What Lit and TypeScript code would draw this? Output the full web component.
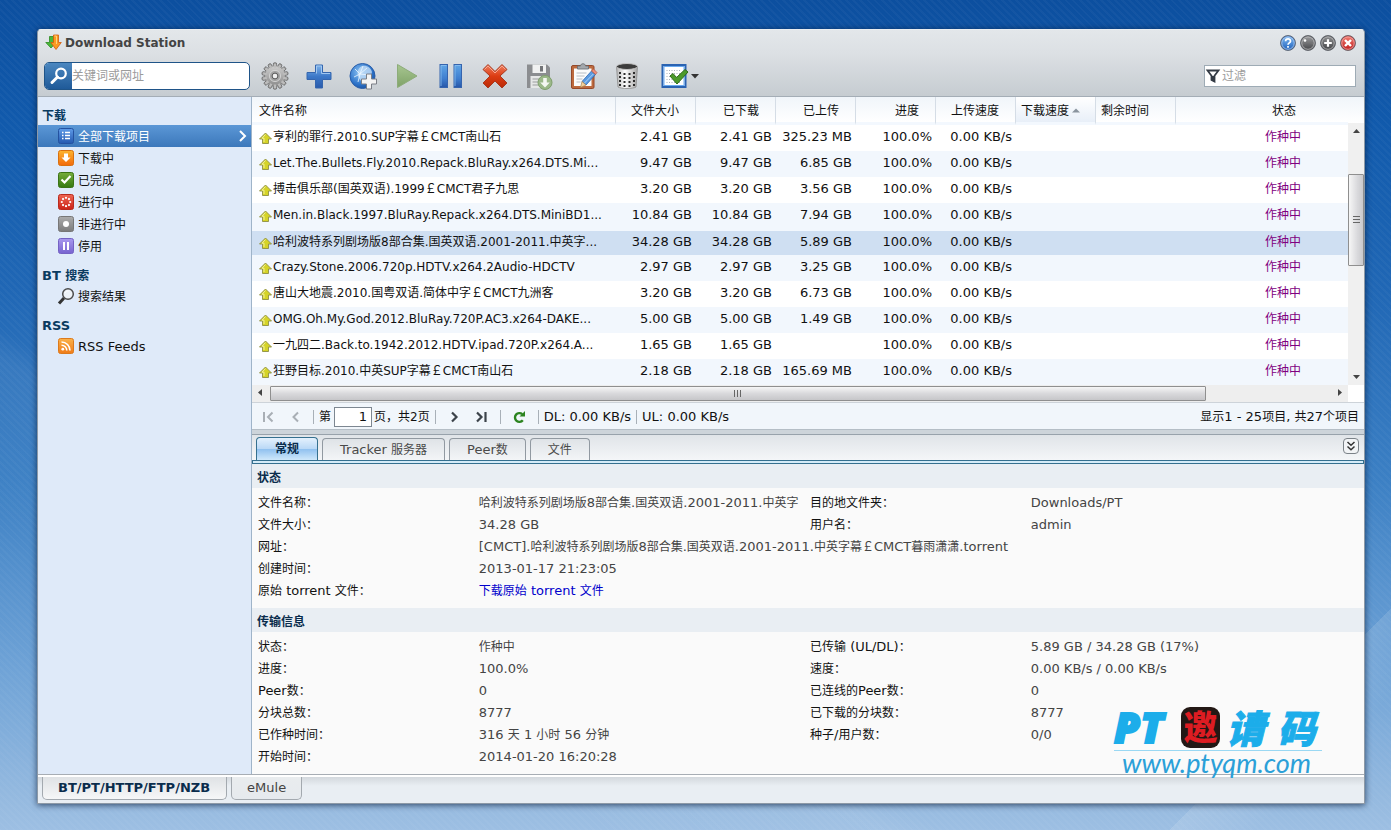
import { LitElement, html, css, svg, nothing } from "lit";
import { customElement, state } from "lit/decorators.js";
import { classMap } from "lit/directives/class-map.js";

const CJK_RUN = /([\u3000-\u9fff\uff00-\uffef]+)/;

/** Chinese runs are set one pixel smaller than the Latin text around them. */
const mixed = (text: string) =>
  text.split(CJK_RUN).map((part, i) => (i % 2 ? html`<span class="han">${part}</span>` : part));

const icon = (w: number, h: number, body: unknown) =>
  html`<svg class="icon" width=${w} height=${h} viewBox="0 0 ${w} ${h}" aria-hidden="true">${body}</svg>`;

const teeth = Array.from({ length: 14 }, (_, i) => (i * 360) / 14);
const spinnerDots = Array.from({ length: 8 }, (_, i) => i * 45);
const holes = [11, 15, 19, 23].flatMap((y) => [7, 11.5, 16.5, 21].map((x) => [x, y + (x > 8 && x < 20 ? 1 : 0)]));

const TOOLS = [
  {
    name: "设置",
    art: svg`
      <defs><linearGradient id="gs" x1="0" y1="0" x2="0" y2="1"><stop offset="0" stop-color="#cfcfcf"/><stop offset="1" stop-color="#8b8b8b"/></linearGradient></defs>
      ${teeth.map((a) => svg`<rect x="12.4" y="0.8" width="3.2" height="5" rx="1" fill="#aaa" stroke="#5f5f5f" stroke-width=".8" transform="rotate(${a} 14 14)"/>`)}
      <circle cx="14" cy="14" r="10.400" fill="url(#gs)" stroke="#777" stroke-width=".7"/>
      ${teeth.map((a) => svg`<rect x="12.8" y="2" width="2.4" height="3.500" fill="#bcbcbc" transform="rotate(${a} 14 14)"/>`)}
      <circle cx="14" cy="14" r="5.600" fill="#a2a2a2" stroke="#dadada" stroke-width=".8"/>
      <circle cx="14" cy="14" r="2.900" fill="#efefef" stroke="#555"/>`,
  },
  {
    name: "新增",
    art: svg`
      <defs><linearGradient id="pl" x1="0" y1="0" x2="0" y2="1"><stop offset="0" stop-color="#7db2ea"/><stop offset=".5" stop-color="#3c78c8"/><stop offset="1" stop-color="#2a5bab"/></linearGradient></defs>
      <path d="M10.500 3h7v7.500H26v7h-8.500V26h-7v-8.500H2v-7h8.500z" fill="url(#pl)" stroke="#3566ae"/>
      <path d="M11.500 11.500V4h5v7.500H25" fill="none" stroke="#a8cdf3" stroke-width=".9"/>`,
  },
  {
    name: "新增网址",
    art: svg`
      <defs><radialGradient id="gl" cx=".4" cy=".35" r=".7"><stop offset="0" stop-color="#8cc4f5"/><stop offset=".7" stop-color="#2c72c8"/><stop offset="1" stop-color="#1b519f"/></radialGradient></defs>
      <circle cx="13.500" cy="14" r="12.500" fill="url(#gl)" stroke="#2a5ea9"/>
      <path d="M13 4c5-1 9 2 10 6-1 4-3 5-5 5l-1 5c-3 1-6-1-8-6-1-4 0-8 4-10z" fill="#c9e2f8" opacity=".75"/>
      <path d="M6 7l5 5 7-6M9 20l2-8 9 1M5 15l6-3M14 4l-3 8" fill="none" stroke="#edf6ff" stroke-width=".9" opacity=".9"/>
      <path d="M17.500 12h5v5h5v5h-5v5h-5v-5h-5v-5h5z" fill="#f3f3f3" stroke="#7b7f86"/>`,
  },
  {
    name: "继续",
    art: svg`
      <defs><linearGradient id="py" x1="0" y1="0" x2="0" y2="1"><stop offset="0" stop-color="#a7c690"/><stop offset="1" stop-color="#7fa268"/></linearGradient></defs>
      <path d="M4.500 2.500L24 14 4.500 25.500z" fill="url(#py)" stroke="#8dac7a"/>`,
  },
  {
    name: "暂停",
    art: svg`
      <defs><linearGradient id="pa" x1="0" y1="0" x2="0" y2="1"><stop offset="0" stop-color="#5fa5e6"/><stop offset=".6" stop-color="#3f7fd0"/><stop offset="1" stop-color="#2656a8"/></linearGradient></defs>
      <rect x="3" y="2.500" width="7.500" height="23" fill="url(#pa)" stroke="#3564ae"/><rect x="17" y="2.500" width="7.500" height="23" fill="url(#pa)" stroke="#3564ae"/>
      <path d="M4 24V3.500h5.500M18 24V3.500h5.500" fill="none" stroke="#8cc0f0" stroke-width=".8"/>`,
  },
  {
    name: "删除",
    art: svg`
      <defs><linearGradient id="rm" x1="0" y1="0" x2="0" y2="1"><stop offset="0" stop-color="#f08060"/><stop offset=".5" stop-color="#dc3c12"/><stop offset="1" stop-color="#b92a08"/></linearGradient></defs>
      <path d="M7 2.500l7 7 7-7 5 5-7 6.500 7 7-5 5-7-7-7 7-5-5 7-7-7-6.500z" fill="url(#rm)" stroke="#a83a20"/>
      <path d="M3.500 7.500L7 4l7 7 7-7 3.500 3.500" fill="none" stroke="#f9a78f"/>`,
  },
  {
    name: "保存",
    art: svg`
      <path d="M2 2.500h20l3 3V26H2z" fill="#8b8d90"/>
      <rect x="7.500" y="2.500" width="13.500" height="8.500" fill="#f0f1f1"/><rect x="15" y="4" width="3" height="5.500" fill="#737578"/>
      <rect x="5.500" y="14" width="17" height="12" fill="#e6e7e7"/><path d="M7.500 17h9M7.500 20h7M7.500 23h6" stroke="#9b9d9f"/>
      <circle cx="20" cy="20.500" r="7" fill="#9bb889" stroke="#7f9f6d"/>
      <path d="M18.200 16h3.600v4.500h3L20 25.500l-4.800-5h3z" fill="#f4f7f2"/>`,
  },
  {
    name: "编辑",
    art: svg`
      <rect x="2.500" y="3.500" width="22.500" height="23" rx="1.500" fill="#bd6a3e" stroke="#95492a"/>
      <rect x="5" y="6.500" width="17.500" height="17.500" fill="#fbfbfb"/>
      <path d="M8.500 7V4h3c0-3 5-3 5 0h3v3z" fill="#a3a8ad" stroke="#6c7176" stroke-width=".9"/>
      <path d="M7.500 11h10M7.500 14h8M7.500 17h6M7.500 20h4" stroke="#b9bec4"/>
      <path d="M22.500 9l4 3.500-9.500 10.500-4-3.500z" fill="#5c9ce2" stroke="#2f66b0" stroke-width=".8"/>
      <path d="M24.300 12L15.500 21" stroke="#b2d5f7"/><path d="M22.500 9l2-2 3.500 3.500-1.500 2z" fill="#ee8e78" stroke="#b65a47" stroke-width=".7"/>
      <path d="M13 19.500l4 3.500-5.500 2.500z" fill="#f5d29d" stroke="#a8824f" stroke-width=".7"/>`,
  },
  {
    name: "清除",
    art: svg`
      <defs><linearGradient id="tr" x1="0" y1="0" x2="1" y2="0"><stop offset="0" stop-color="#b4b4b4"/><stop offset=".4" stop-color="#fff"/><stop offset="1" stop-color="#a6a6a6"/></linearGradient></defs>
      <path d="M3.500 4.500L5 25c3 2 15 2 18 0l1.500-20.500z" fill="url(#tr)" stroke="#8b8b8b" stroke-width=".8"/>
      ${holes.map(([x, y]) => svg`<rect x=${x - 1} y=${y - 1} width="2" height="2" fill="#2c2c2c"/>`)}
      <ellipse cx="14" cy="4.500" rx="10.500" ry="3" fill="#3c3c3c" stroke="#c4c4c4"/>`,
  },
];

const PICK = svg`
  <rect x="1.500" y="3" width="23" height="22" fill="#fff" stroke="#2a63b2" stroke-width="2"/>
  <rect x="3" y="4.500" width="20" height="19" fill="#fff" stroke="#6aaaf0"/>
  <path d="M5.500 8.500H20M5.500 11.500H20M5.500 14.500H20M5.500 17.500H20M5.500 20.500H20" stroke="#a9b2bd" stroke-dasharray="1 1.500"/>
  <path d="M9 14l3-2.500 3.500 4L24 7.500l3 2.500L16 22z" fill="#4c9a2a" stroke="#2f6b19"/>`;

const tile = (id: string, top: string, bottom: string, edge: string, mark: unknown) => svg`
  <defs><linearGradient id=${id} x1="0" y1="0" x2="0" y2="1"><stop offset="0" stop-color=${top}/><stop offset="1" stop-color=${bottom}/></linearGradient></defs>
  <rect x=".5" y=".5" width="15" height="15" rx="2" fill="url(#${id})" stroke=${edge}/>${mark}`;

const GROUPS = [
  {
    title: "下载",
    items: [
      { name: "全部下载项目", art: tile("n1", "#5f9be8", "#2459b0", "#2452a0", svg`<path d="M4 4.500h1.500M7 4.500h5M4 7.500h1.500M7 7.500h5M4 10.500h1.500M7 10.500h5" stroke="#fff" stroke-width="1.500"/>`) },
      { name: "下载中", art: tile("n2", "#fdb52f", "#f26a0c", "#d9700f", svg`<path d="M6 3.500h4v4h2.500L8 12 3.500 7.500H6z" fill="#fff"/>`) },
      { name: "已完成", art: tile("n3", "#76ad3c", "#34780f", "#3b7316", svg`<path d="M3.500 7.500l3 3L12.500 4" fill="none" stroke="#fff" stroke-width="2.200"/>`) },
      { name: "进行中", art: tile("n4", "#ee6653", "#cb2317", "#b92a1e", spinnerDots.map((a) => svg`<circle cx="8" cy="3.800" r="1.100" fill="#fff" transform="rotate(${a} 8 8)"/>`)) },
      { name: "非进行中", art: tile("n5", "#acacac", "#7b7b7b", "#777", svg`<circle cx="8" cy="8" r="3" fill="#fff"/>`) },
      { name: "停用", art: tile("n6", "#a898ee", "#7763cf", "#7462c4", svg`<path d="M6 4v8M10 4v8" stroke="#fff" stroke-width="2"/>`) },
    ],
  },
  {
    title: "BT 搜索",
    items: [
      { name: "搜索结果", art: svg`<path d="M1 15.500L6 10" stroke="#333" stroke-width="3"/><circle cx="10" cy="6" r="5.300" fill="#eef3f8" stroke="#4b4b4b" stroke-width="1.500"/><path d="M7 5c.5-1.500 2-2 3.500-2" fill="none" stroke="#fff"/>` },
    ],
  },
  {
    title: "RSS",
    items: [
      { name: "RSS Feeds", art: tile("n7", "#fbb24a", "#ef7b18", "#dc7a1c", svg`<circle cx="4.800" cy="11.200" r="1.400" fill="#fff"/><path d="M3.500 7.200a5.300 5.300 0 0 1 5.300 5.300M3.500 4a8.500 8.500 0 0 1 8.500 8.500" fill="none" stroke="#fff" stroke-width="1.600"/>`) },
    ],
  },
];

const COLUMNS = [
  { title: "文件名称", cls: "c-name" },
  { title: "文件大小", cls: "c-num" },
  { title: "已下载", cls: "c-num" },
  { title: "已上传", cls: "c-num" },
  { title: "进度", cls: "c-num" },
  { title: "上传速度", cls: "c-num" },
  { title: "下载速度", cls: "c-text", sorted: true },
  { title: "剩余时间", cls: "c-text" },
  { title: "状态", cls: "c-state" },
];

const ROWS: [string, string, string, string][] = [
  ["亨利的罪行.2010.SUP字幕￡CMCT南山石", "2.41 GB", "2.41 GB", "325.23 MB"],
  ["Let.The.Bullets.Fly.2010.Repack.BluRay.x264.DTS.Mi...", "9.47 GB", "9.47 GB", "6.85 GB"],
  ["搏击俱乐部(国英双语).1999￡CMCT君子九思", "3.20 GB", "3.20 GB", "3.56 GB"],
  ["Men.in.Black.1997.BluRay.Repack.x264.DTS.MiniBD1...", "10.84 GB", "10.84 GB", "7.94 GB"],
  ["哈利波特系列剧场版8部合集.国英双语.2001-2011.中英字...", "34.28 GB", "34.28 GB", "5.89 GB"],
  ["Crazy.Stone.2006.720p.HDTV.x264.2Audio-HDCTV", "2.97 GB", "2.97 GB", "3.25 GB"],
  ["唐山大地震.2010.国粤双语.简体中字￡CMCT九洲客", "3.20 GB", "3.20 GB", "6.73 GB"],
  ["OMG.Oh.My.God.2012.BluRay.720P.AC3.x264-DAKE...", "5.00 GB", "5.00 GB", "1.49 GB"],
  ["一九四二.Back.to.1942.2012.HDTV.ipad.720P.x264.A...", "1.65 GB", "1.65 GB", ""],
  ["狂野目标.2010.中英SUP字幕￡CMCT南山石", "2.18 GB", "2.18 GB", "165.69 MB"],
];

const TABS = ["常规", "Tracker 服务器", "Peer数", "文件"];

const STATUS = [
  ["文件名称：", "哈利波特系列剧场版8部合集.国英双语.2001-2011.中英字", "目的地文件夹：", "Downloads/PT"],
  ["文件大小：", "34.28 GB", "用户名：", "admin"],
  ["网址：", "[CMCT].哈利波特系列剧场版8部合集.国英双语.2001-2011.中英字幕￡CMCT暮雨潇潇.torrent"],
  ["创建时间：", "2013-01-17 21:23:05"],
];

const TRANSFER = [
  ["状态：", "作种中", "已传输 (UL/DL)：", "5.89 GB / 34.28 GB (17%)"],
  ["进度：", "100.0%", "速度：", "0.00 KB/s / 0.00 KB/s"],
  ["Peer数：", "0", "已连线的Peer数：", "0"],
  ["分块总数：", "8777", "已下载的分块数：", "8777"],
  ["已作种时间：", "316 天 1 小时 56 分钟", "种子/用户数：", "0/0"],
  ["开始时间：", "2014-01-20 16:20:28"],
];

@customElement("app-root")
export class AppRoot extends LitElement {
  @state() private nav = "全部下载项目";
  @state() private row = 4;
  @state() private tab = 0;

  static styles = css`
    :host {
      display: block;
      box-sizing: border-box;
      min-height: 100vh;
      padding: 29px 26px 27px 37px;
      color: #111;
      font: 13px/22px "DejaVu Sans", "Noto Sans CJK SC", sans-serif;
      background:
        repeating-linear-gradient(45deg, rgba(255, 255, 255, 0.03) 0 2px, transparent 2px 5px),
        linear-gradient(135deg, transparent 90%, rgba(255, 255, 255, 0.12) 90%, transparent 94%),
        linear-gradient(28deg, transparent 20%, rgba(255, 255, 255, 0.06) 30%, transparent 32%),
        linear-gradient(#0c4f9f 0, #115aac 15%, #2067b5 35%, #3c80c4 58%, #6ea2d6 80%, #97bbe0 97%, #9dbfe3);
      display: flex;
    }
    * { box-sizing: border-box; }
    .han { font-size: 12px; }
    button, input { font: inherit; color: inherit; margin: 0; padding: 0; }
    button { background: none; border: 0; cursor: pointer; }
    ::placeholder { color: #9b9b9b; opacity: 1; }
    .icon { display: block; flex: none; overflow: visible; }
    h1, h2, dl, dd, dt { margin: 0; font-size: inherit; }

    .window {
      flex: 1;
      min-width: 0;
      position: relative;
      display: flex;
      flex-direction: column;
      border: 1px solid #8d99a6;
      border-top-color: #e9edf0;
      border-radius: 4px 4px 0 0;
      box-shadow: 0 1px 6px rgba(0, 20, 50, 0.7);
      background: #e9eef3;
    }
    .top {
      border-bottom: 1px solid #a4adb6;
      border-radius: 4px 4px 0 0;
      background: linear-gradient(#e3e7ea, #dce0e4 35%, #c6ccd1);
    }
    .title { display: flex; align-items: center; gap: 3px; height: 26px; padding: 0 8px 0 7px; }
    .title h1 { flex: 1; color: #444; font-size: 12px; font-weight: bold; }
    .wins { display: flex; gap: 4px; }
    .tools { display: flex; align-items: center; height: 40px; padding: 0 8px 0 6px; }
    .search {
      display: flex;
      width: 206px;
      height: 28px;
      border: 1px solid #1f5488;
      border-radius: 5px;
      background: #fff;
      overflow: hidden;
    }
    .search button { width: 27px; display: grid; place-items: center; background: linear-gradient(#4b87c0, #1f5a99); }
    .search input { flex: 1; min-width: 0; border: 0; font-size: 12px; outline-offset: -2px; background: none; }
    .strip { flex: 1; display: flex; padding-left: 3px; }
    .tool { width: 44px; height: 32px; display: flex; align-items: center; justify-content: center; }
    .tool.menu { width: 54px; gap: 2px; padding-left: 8px; }
    .filter {
      display: flex;
      align-items: center;
      width: 152px;
      height: 22px;
      padding-left: 1px;
      gap: 2px;
      border: 1px solid #9eabb5;
      background: #fff;
    }
    .filter input { flex: 1; min-width: 0; border: 0; font-size: 12px; line-height: 18px; background: none; }

    .body { flex: 1; display: flex; }
    .side { width: 214px; flex: none; padding-top: 8px; border-right: 1px solid #9fb4c9; background: #dfeaf9; }
    .side h2 { height: 20px; line-height: 22px; padding-left: 4px; color: #0a3b60; }
    .group { margin-bottom: 8px; }
    .nav { display: flex; align-items: center; gap: 4px; width: 100%; height: 22px; padding: 0 4px 0 20px; text-align: left; }
    .nav span.label { flex: 1; padding-top: 2px; }
    .nav.on { color: #fff; background: linear-gradient(#5b97d6, #3c78bb); }

    .main { flex: 1; min-width: 0; display: flex; flex-direction: column; background: #fafafa; }
    .list { display: flex; background: #fff; }
    .viewport { flex: 1; min-width: 0; overflow: hidden; }
    table { width: 1138px; min-width: 100%; table-layout: fixed; border-collapse: separate; border-spacing: 0; }
    .c-num, .c-text { width: 80px; }
    .c-state { width: 214px; }
    th {
      height: 27px;
      padding: 0;
      font-weight: normal;
      text-align: left;
      border-right: 1px solid #d5dde6;
      border-bottom: 3px solid #f3f8fe;
      background: linear-gradient(#f0f5fa, #fff);
    }
    th button { width: 100%; height: 24px; padding: 3px 4px 0 7px; text-align: left; font-size: 12px; line-height: 20px; }
    th.c-num button { padding-right: 16px; text-align: right; }
    th.c-text button { display: flex; align-items: center; gap: 3px; padding-left: 5px; }
    th.c-state button { text-align: center; }
    th.sorted { background: linear-gradient(#fff, #e8eff8); }
    td { height: 26px; padding: 0 4px 2px; line-height: 22px; white-space: nowrap; overflow: hidden; }
    td.c-num { text-align: right; }
    td.c-state { text-align: center; color: #800080; }
    td.c-name { padding: 0 0 2px 7px; font-size: 12px; }
    .file { display: flex; align-items: center; gap: 1px; }
    .file .icon { position: relative; top: 2px; }
    tbody tr:nth-child(even) { background: #f2f7fd; }
    tbody tr.on td { background: #cfdff2; border-top: 2px solid #f2f7fd; line-height: 20px; }
    .vbar { width: 16px; display: flex; flex-direction: column; background: #f0f0f0; }
    .vbar .cap { height: 26px; background: linear-gradient(#f0f5fa, #fff); }
    .arrow { width: 16px; height: 16px; display: grid; place-items: center; flex: none; }
    .vtrack { flex: 1; display: flex; flex-direction: column; }
    .vtrack::before { content: ""; flex: 35; }
    .vtrack::after { content: ""; flex: 103; }
    .vthumb { flex: 91; border: 1px solid #8f8f8f; border-radius: 1px; display: grid; place-items: center; background: linear-gradient(90deg, #f6f6f6, #d9d9dc 60%, #c9c9cc); }
    .hbar { display: flex; height: 18px; padding-right: 16px; border-bottom: 1px solid #cdd3d9; background: linear-gradient(90deg, #eee calc(100% - 16px), #fff 0); }
    .htrack { flex: 1; display: flex; padding: 1px 0 1px 2px; }
    .htrack::after { content: ""; flex: 126; }
    .hthumb { flex: 936; border: 1px solid #8f8f8f; border-radius: 1px; display: grid; place-items: center; background: linear-gradient(#f6f6f6, #d9d9dc 50%, #c6c6c9); }

    .pager { display: flex; align-items: center; height: 27px; padding: 2px 5px 0 2px; border-bottom: 1px solid #b5bec6; background: #f1f6fb; }
    .step { width: 27px; height: 22px; display: grid; place-items: center; }
    .sep { width: 1px; height: 14px; background: #a8b0b8; margin: 0 5px; }
    .pager label { display: flex; align-items: center; font-size: 12px; }
    .pager label input { width: 38px; height: 20px; padding-right: 4px; margin: 0 2px 0 3px; border: 1px solid #7d8791; font-size: 13px; text-align: right; background: #fff; }
    .total { margin-left: auto; }
    .split { height: 5px; border-bottom: 1px solid #98a2ab; background: #cdd4da; }

    .tabs { display: flex; align-items: flex-end; gap: 4px; height: 25px; padding: 0 5px 0 4px; background: linear-gradient(#e0e4e8, #f4f6f8); }
    .tab {
      height: 22px;
      padding: 0 17px;
      line-height: 22px;
      color: #4a4a4a;
      border: 1px solid #9199a1;
      border-bottom: 0;
      border-radius: 4px 4px 0 0;
      background: linear-gradient(#dfe3e7, #f3f5f7);
    }
    .tab.on { height: 23px; padding: 0 18px; color: #0a2c4c; font-weight: bold; border-color: #35708f; background: linear-gradient(#e4f1fd, #b9d8f6 50%, #8fc0ef 50%, #cfe8fb); }
    .fold { margin: 0 0 6px auto; width: 16px; height: 16px; display: grid; place-items: center; border: 1px solid #7b8288; border-radius: 4px; background: #f2f4f6; }
    .rule { height: 4px; border: 1px solid #35708f; background: #d4ebf8; }
    .sect { height: 24px; line-height: 28px; padding-left: 5px; color: #0a2c4c; background: #e9eef3; }
    .facts { padding: 4px 2px 6px 6px; }
    .fact { display: grid; grid-template-columns: 20% 30% 20% 30%; height: 22px; white-space: nowrap; color: #111; }
    dd { color: #444; }
    .fact.wide dd { grid-column: 2 / -1; }
    a { color: #00c; text-decoration: none; }

    .foot { display: flex; gap: 4px; height: 29px; padding: 0 4px; border-top: 1px solid #a7adb4; background: linear-gradient(#fff 2px, #d3d8dd 2px, #e9eef3 11px); }
    .btab { height: 23px; margin-top: 2px; padding: 0 15px; line-height: 22px; color: #444; border: 1px solid #a3a9af; border-top: 0; border-radius: 0 0 5px 5px; background: linear-gradient(#e9ecee, #e6eaee); }
    .btab.on { padding: 0 16px 0 15px; color: #0a2c4c; font-weight: bold; background: linear-gradient(#dfe2e5, #f6f7f8); }

    .mark { position: absolute; right: 42px; bottom: 28px; width: 208px; color: #1cadea; }
    .mark .big { display: flex; align-items: center; height: 46px; border-bottom: 1px solid #9ad8f3; font: italic 900 38px/44px "Noto Sans CJK SC", sans-serif; }
    .mark .pt { width: 67px; font: italic 800 42px/44px "Open Sans", sans-serif; -webkit-text-stroke: 2px #1cadea; }
    .mark .seal { width: 39px; height: 41px; border-radius: 9px; color: #dd1c22; background: #231815; font-size: 34px; line-height: 38px; text-align: center; font-style: normal; }
    .mark .q { flex: 1; text-align: center; -webkit-text-stroke: 1px #1cadea; }
    .mark .url { padding-left: 8px; color: #2ba0d8; font: italic 27px/24px Lato, sans-serif; }
  `;

  private top() {
    const ball = (id: string, a: string, b: string, mark: unknown) => icon(16, 16, svg`
      <defs><linearGradient id=${id} x1="0" y1="0" x2="0" y2="1"><stop offset="0" stop-color=${a}/><stop offset="1" stop-color=${b}/></linearGradient></defs>
      <circle cx="8" cy="8" r="7.500" fill=${b} stroke="#5c6066" stroke-width=".8"/><circle cx="8" cy="8" r="6.300" fill="url(#${id})" stroke="#fff" stroke-opacity=".65" stroke-width=".8"/>${mark}`);
    return html`
      <header class="top">
        <div class="title">
          ${icon(17, 18, svg`
            <path d="M4.500 2.500h4v6h2.500L6 14 .8 8.500h3.700z" fill="#4cb83a" stroke="#2b8a20" stroke-width=".8"/>
            <path d="M8.500 1h5v7.500h2.800L11 15.500 5.800 8.500h2.700z" fill="#fb9a22" stroke="#d35c0a" stroke-width=".8"/>
            <path d="M9.500 2h2v8" fill="none" stroke="#ffd27a"/>`)}
          <h1>Download Station</h1>
          <div class="wins">
            <button aria-label="帮助">${ball("w1", "#7db8f3", "#2465bd", svg`<path d="M5.600 6.200c0-3 4.900-3 4.900 0C10.500 7.800 8 8 8 9.700M8 11v1.700" fill="none" stroke="#fff" stroke-width="1.700"/>`)}</button>
            <button aria-label="最小化">${ball("w2", "#98999b", "#4a4b4e", svg`<circle cx="5" cy="5.500" r="1.300" fill="#fff"/><path d="M3 9c3-2 7-2 10 0" fill="none" stroke="#777" />`)}</button>
            <button aria-label="最大化">${ball("w3", "#8d8e90", "#46474a", svg`<path d="M8 4.200v7.600M4.200 8h7.600" stroke="#fff" stroke-width="2.200"/>`)}</button>
            <button aria-label="关闭">${ball("w4", "#f07a6f", "#c02020", svg`<path d="M5 5l6 6M11 5l-6 6" stroke="#fff" stroke-width="2.400"/>`)}</button>
          </div>
        </div>
        <div class="tools">
          <form class="search" @submit=${(e: Event) => e.preventDefault()}>
            <button aria-label="搜索">${icon(18, 18, svg`<circle cx="11" cy="6.500" r="4.800" fill="none" stroke="#fff" stroke-width="2.200"/><path d="M7.500 10L2 15.500" stroke="#fff" stroke-width="3" stroke-linecap="round"/>`)}</button>
            <input type="text" aria-label="搜索" placeholder="关键词或网址" />
          </form>
          <div class="strip">
            ${TOOLS.map((t) => html`<button class="tool" aria-label=${t.name}>${icon(28, 28, t.art)}</button>`)}
            <button class="tool menu" aria-label="选取">${icon(28, 28, PICK)}${icon(8, 5, svg`<path d="M0 0h8L4 4.500z" fill="#333"/>`)}</button>
          </div>
          <label class="filter">
            ${icon(14, 16, svg`<path d="M1.500 2.500h11L8.500 7.800v5.700l-3-1.500V7.800z" fill="#fff" stroke="#333a44" stroke-width="1.800"/><path d="M5.500 8v4l3 1.500V8z" fill="#333a44"/>`)}
            <input type="text" aria-label="过滤" placeholder="过滤" />
          </label>
        </div>
      </header>`;
  }

  private side() {
    return html`<nav class="side">
      ${GROUPS.map((g) => html`<section class="group">
        <h2>${mixed(g.title)}</h2>
        ${g.items.map((it) => html`
          <button class=${classMap({ nav: true, on: it.name === this.nav })} @click=${() => (this.nav = it.name)}>
            ${icon(16, 16, it.art)}<span class="label">${mixed(it.name)}</span>
            ${it.name === this.nav ? icon(9, 12, svg`<path d="M2 1l5 5-5 5" fill="none" stroke="#fff" stroke-width="2"/>`) : nothing}
          </button>`)}
      </section>`)}
    </nav>`;
  }

  private list() {
    return html`
      <div class="list">
        <div class="viewport">
          <table>
            <thead><tr>
              ${COLUMNS.map((c) => html`<th class=${classMap({ [c.cls]: true, sorted: !!c.sorted })}>
                <button>${c.title}${c.sorted ? icon(8, 5, svg`<path d="M0 4.500h8L4 .500z" fill="#8a949e"/>`) : nothing}</button>
              </th>`)}
            </tr></thead>
            <tbody>
              ${ROWS.map((r, i) => html`<tr class=${classMap({ on: i === this.row })} @click=${() => (this.row = i)}>
                <td class="c-name"><div class="file">
                  ${icon(13, 13, svg`<path d="M6.500 1l6 6H9.500v4.500h-6V7H.5z" fill="#d5d327" stroke="#8d8f43" stroke-width=".9"/><path d="M6.500 2.500L3 6.200h2V10" fill="none" stroke="#f1f09a"/>`)}
                  <span>${mixed(r[0])}</span></div></td>
                <td class="c-num">${r[1]}</td><td class="c-num">${r[2]}</td><td class="c-num">${r[3]}</td>
                <td class="c-num">100.0%</td><td class="c-num">0.00 KB/s</td>
                <td></td><td></td><td class="c-state">${mixed("作种中")}</td>
              </tr>`)}
            </tbody>
          </table>
        </div>
        <div class="vbar">
          <div class="cap"></div>
          <div class="arrow">${icon(7, 4, svg`<path d="M0 4h7L3.500 0z" fill="#444"/>`)}</div>
          <div class="vtrack"><div class="vthumb">${icon(7, 8, svg`<path d="M0 .500h7M0 3.500h7M0 6.500h7" stroke="#666"/>`)}</div></div>
          <div class="arrow">${icon(7, 4, svg`<path d="M0 0h7L3.500 4z" fill="#444"/>`)}</div>
        </div>
      </div>
      <div class="hbar">
        <div class="arrow">${icon(4, 7, svg`<path d="M4 0v7L0 3.500z" fill="#444"/>`)}</div>
        <div class="htrack"><div class="hthumb">${icon(8, 7, svg`<path d="M.500 0v7M3.500 0v7M6.500 0v7" stroke="#666"/>`)}</div></div>
        <div class="arrow">${icon(4, 7, svg`<path d="M0 0v7l4-3.500z" fill="#444"/>`)}</div>
      </div>
      <div class="pager">
        <button class="step" aria-label="首页">${icon(12, 10, svg`<path d="M2 0v10M10.500 .500L6 5l4.500 4.500" fill="none" stroke="#a9afb5" stroke-width="2"/>`)}</button>
        <button class="step" aria-label="上一页">${icon(12, 10, svg`<path d="M9 .500L4.500 5 9 9.500" fill="none" stroke="#a9afb5" stroke-width="2"/>`)}</button>
        <label><span class="sep"></span>第<input type="text" value="1" />页，共2页</label>
        <span class="sep"></span>
        <button class="step" aria-label="下一页">${icon(12, 10, svg`<path d="M4 .500L8.500 5 4 9.500" fill="none" stroke="#3c434a" stroke-width="2.200"/>`)}</button>
        <button class="step" aria-label="末页">${icon(12, 10, svg`<path d="M2 .500L6.500 5 2 9.500M10.500 0v10" fill="none" stroke="#3c434a" stroke-width="2.200"/>`)}</button>
        <span class="sep"></span>
        <button class="step" aria-label="刷新">${icon(12, 12, svg`<path d="M9.800 9.300A4.400 4.400 0 1 1 9.300 3.200" fill="none" stroke="#2c8420" stroke-width="2.400"/><path d="M12 0v5.500H6.500z" fill="#2c8420"/>`)}</button>
        <span class="sep"></span>DL: 0.00 KB/s<span class="sep"></span>UL: 0.00 KB/s
        <span class="total">${mixed("显示1 - 25项目, 共27个项目")}</span>
      </div>
      <div class="split"></div>`;
  }

  private facts(rows: string[][], extra: unknown = nothing) {
    return html`<dl class="facts">
      ${rows.map((r) => html`<div class=${classMap({ fact: true, wide: r.length === 2 })}>
        <dt>${mixed(r[0])}</dt><dd>${mixed(r[1])}</dd>
        ${r.length > 2 ? html`<dt>${mixed(r[2])}</dt><dd>${mixed(r[3])}</dd>` : nothing}
      </div>`)}${extra}
    </dl>`;
  }

  render() {
    return html`
      <div class="window">
        ${this.top()}
        <div class="body">
          ${this.side()}
          <main class="main">
            ${this.list()}
            <div class="tabs" role="tablist">
              ${TABS.map((t, i) => html`<button role="tab" aria-selected=${i === this.tab} class=${classMap({ tab: true, on: i === this.tab })} @click=${() => (this.tab = i)}>${mixed(t)}</button>`)}
              <button class="fold" aria-label="收起">${icon(10, 10, svg`<path d="M1.500 1L5 4.200 8.500 1M1.500 5.500L5 8.700l3.500-3.200" fill="none" stroke="#333" stroke-width="1.500"/>`)}</button>
            </div>
            <div class="rule"></div>
            <h2 class="sect">${mixed("状态")}</h2>
            ${this.facts(STATUS, html`<div class="fact wide"><dt>${mixed("原始 torrent 文件：")}</dt><dd><a href="#">${mixed("下载原始 torrent 文件")}</a></dd></div>`)}
            <h2 class="sect">${mixed("传输信息")}</h2>
            ${this.facts(TRANSFER)}
          </main>
        </div>
        <footer class="foot">
          <button class="btab on">BT/PT/HTTP/FTP/NZB</button>
          <button class="btab">eMule</button>
        </footer>
        <div class="mark">
          <div class="big"><span class="pt">PT</span><span class="seal">邀</span><span class="q">请</span><span class="q">码</span></div>
          <div class="url">www.ptyqm.com</div>
        </div>
      </div>`;
  }
}
